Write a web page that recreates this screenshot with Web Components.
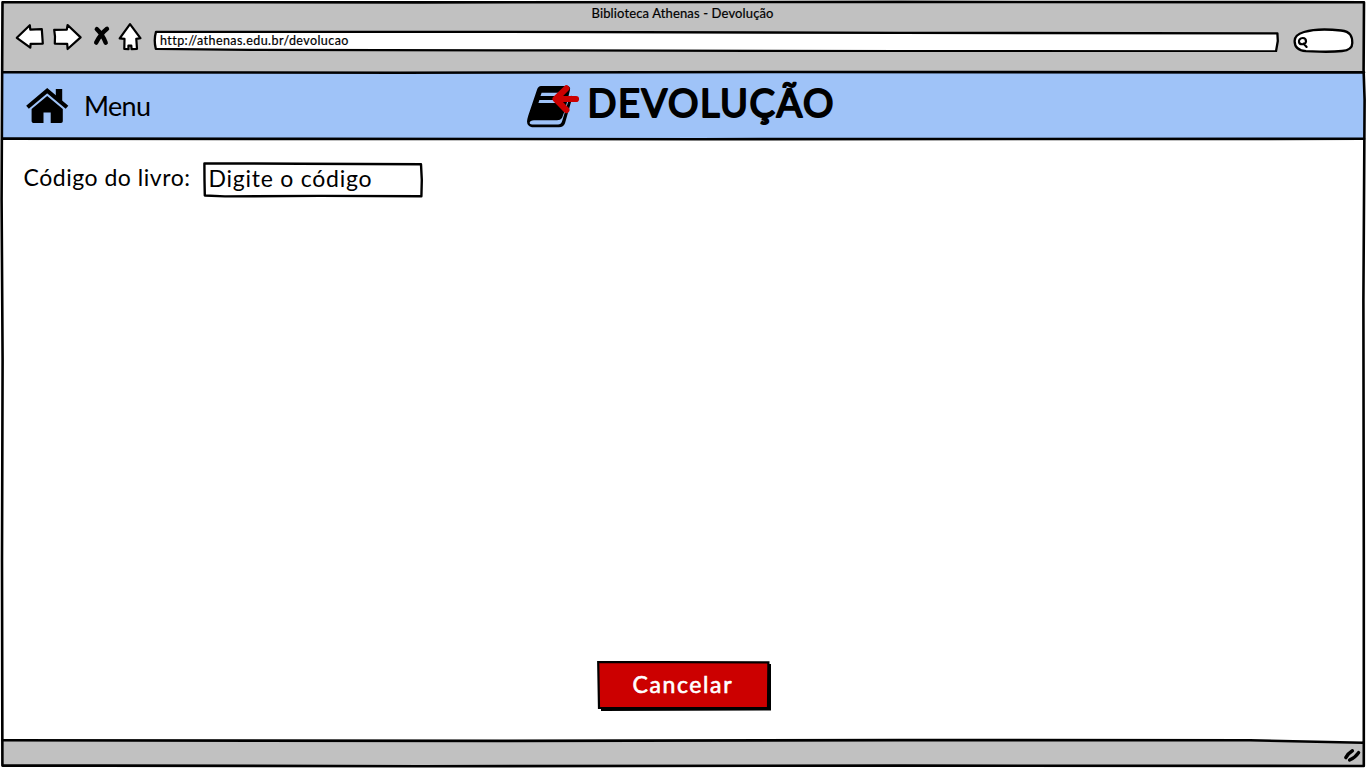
<!DOCTYPE html>
<html lang="pt-BR">
<head>
<meta charset="utf-8">
<title>Biblioteca Athenas - Devolução</title>
<style>
html,body{margin:0;height:100%;background:#fff;overflow:hidden}
body{font-family:Lato,"Open Sans",sans-serif;color:#000}
</style>
</head>
<body>
<sketch-window>
  <browser-bar slot="chrome" heading="Biblioteca Athenas - Devolução" url="http://athenas.edu.br/devolucao"></browser-bar>
  <page-header slot="header"></page-header>
  <sketch-field label="Código do livro:" value="Digite o código"></sketch-field>
  <sketch-button slot="action"><fit-text w="99">Cancelar</fit-text></sketch-button>
</sketch-window>
<script>
const define = (name, html, setup) => {
  const tpl = document.createElement('template');
  customElements.define(name, class extends HTMLElement {
    connectedCallback() {
      if (this.shadowRoot) return;
      tpl.innerHTML = html(this);
      this.attachShadow({mode: 'open'}).append(tpl.content.cloneNode(true));
      if (setup) setup(this);
    }
  });
};

/* Inline text whose tracking is adjusted to fill the width in "w". */
define('fit-text', () => `<style>:host{display:block;white-space:nowrap;line-height:1;flex:none}span{display:inline-block}</style><span><slot></slot></span>`,
  el => {
    const run = () => {
      const s = el.shadowRoot.querySelector('span');
      const n = el.textContent.length;
      s.style.letterSpacing = '0px';
      const d = (+el.getAttribute('w') - s.getBoundingClientRect().width) / (n - 1);
      s.style.letterSpacing = d.toFixed(3) + 'px';
      el.style.width = el.getAttribute('w') + 'px';
    };
    requestAnimationFrame(run);
    run();
  });

define('sketch-window', () => `<style>
:host{display:block;width:1366px;height:768px;position:relative}
.win{display:grid;grid-template-rows:72px 67px 1fr 27px;height:100%;box-sizing:border-box;padding:0}
main{display:flex;flex-direction:column;justify-content:space-between;padding:23px 0 30px 24px}
.act{display:flex;justify-content:center;padding-right:22px}
footer{background:#c1c1c1;margin:0 2px 2px}
.ink{position:absolute;inset:0;pointer-events:none}
</style>
<div class="win"><slot name="chrome"></slot><slot name="header"></slot>
<main><slot></slot><div class="act"><slot name="action"></slot></div></main><footer></footer></div>
<svg class="ink" width="1366" height="768" fill="none" stroke="#000" stroke-width="2.6" stroke-linejoin="round" stroke-linecap="round">
<path fill="#fff" stroke="none" d="M900 738L1362 738V743L1240 740.5Z"/>
<path d="M2.5 2.2L420 2.4L900 1.9L1364 2.2L1363.6 70L1364.6 100L1363.4 300L1363.8 560L1363.8 766L900 765.6L420 766.2L100 765.6L2.4 765.6L2 560L2.6 360L1.6 200L2.2 60Z"/>
<path d="M2.5 72.2L400 72.7L800 72L1364 72.4"/>
<path d="M2.5 138.6L300 138.9L700 139.2L1364 138.8"/>
<path d="M2.5 740.3L500 740.9L900 740.1L1250 740.3L1363 742.8"/>
<path stroke-width="3.4" d="M1345.8 757.6Q1348 753.5 1352.4 750.8M1349.6 760Q1355.5 757.3 1358.6 752.6"/>
</svg>`);

define('browser-bar', el => `<style>
:host{display:flex;flex-direction:column;background:#c1c1c1;margin:1px 2px 0}
.title{display:flex;justify-content:center;padding:6px 1px 0 0;height:16px;font-size:13px;-webkit-text-stroke:.2px #000}
.row{display:flex;align-items:flex-start;padding-left:13px}
svg{display:block;flex:none}
.url{display:grid;width:1126px;height:22px;margin:7px 0 0 9px}
.url>*{grid-area:1/1}
.url fit-text{font-size:12.5px;padding:5px 0 0 7px;z-index:1;-webkit-text-stroke:.2px #000}
.search{margin:4px 0 0 13px}
</style>
<div class="title"><fit-text w="182">${el.getAttribute('heading')}</fit-text></div>
<div class="row">
<svg width="129" height="30" viewBox="15 23 129 30" fill="#fff" stroke="#000" stroke-width="2.2" stroke-linejoin="round">
<path d="M16.8 37.8L29.8 25.2L30.3 29.7L41.8 29.2L42.8 43.6L30.6 43.8L30.3 47.6Z"/>
<path d="M54.2 29.8L66.8 29.6L67.6 25L80.6 37.4L67.6 49L67.2 43.8L54.8 43.6L55 36.5Z"/>
<path fill="none" stroke-width="4.4" stroke-linecap="round" d="M96.8 29.2Q102.5 34.5 105.7 42.8M107 28.8Q100.5 34 96.2 42.6"/>
<path d="M130 24.2L140.4 38.2L136.3 38.8L137 48.8L131.6 49.2L131.3 45.7L128.4 45.7L128.5 49.2L124.3 48.9L124.5 38.9L119.7 38.4Z"/>
</svg>
<div class="url"><svg width="1126" height="22" viewBox="153 30 1126 22" fill="#fff" stroke="#000" stroke-width="2.3" stroke-linejoin="round"><path d="M156 31.8L500 31.9L900 32.8L1277.4 33.4L1277.8 41L1276 51.4L900 51.2L560 50.4L250 49.8L155.8 48.8Q153.6 40 156 31.8Z"/></svg>
<fit-text w="188">${el.getAttribute('url')}</fit-text></div>
<svg class="search" width="62" height="28" viewBox="1292 27 62 28" fill="#fff" stroke="#000" stroke-width="2.3" stroke-linejoin="round" stroke-linecap="round"><path d="M1304 32C1314 29 1331 29.4 1341 30.5C1351 31.5 1352.3 37 1352.3 43C1352.3 48 1349 50.4 1342 51C1329 52.5 1318 51.6 1306 51.2C1298 50.6 1294.6 46.5 1294.6 41C1294.6 36.4 1299 33.4 1304 32Z"/><path fill="none" stroke-width="2.2" d="M1302.8 38C1299.8 38 1298.8 40.2 1299 42C1299.6 45.2 1305.6 45 1306 41.5C1306 39 1304.8 38 1302.8 38M1303.6 43.6L1306.6 46.9"/></svg>
</div>`);

define('page-header', () => `<style>
:host{display:grid;grid-template-columns:525px auto 1fr;align-items:start;background:#9fc3f8;margin:0 2px}
.menu{display:flex;gap:14px;padding:15px 0 0 23px;align-items:flex-start}
.menu fit-text{font-size:27px;padding-top:5px}
svg{display:block}
.brand{display:flex;padding-top:8px}
text{font-family:Lato,sans-serif;font-size:38px}
</style>
<div class="menu"><svg width="45" height="37" viewBox="25 87 45 37"><path d="M27.5 107.2L47.2 90.6L67 107.2" fill="none" stroke="#000" stroke-width="4.1"/><path d="M55.8 88.9H62.2V102L55.8 97ZM47.2 96L62.8 109V121.2Q62.8 123 61 123H50.7V112.4H43.5V123H33.4Q31.6 123 31.6 121.2V109Z"/></svg><fit-text w="67">Menu</fit-text></div>
<div class="brand"><svg width="310" height="54" viewBox="527 80 310 54">
<path fill-rule="evenodd" d="M541 86H567Q570.8 86.3 570 90L568 98L565 110L562 118Q560.5 120.3 557 120.3H534Q530 120.4 529.6 123Q529.8 124.4 532 124.4H558Q561 124.4 562 121.5L569.6 97L571.2 95.5Q572.3 98 571.3 101L565 123.2Q563.5 127.2 559 127.2H532Q527.2 126.4 527 121.5Q527.1 119.3 528.3 115.4L537 89.7Q538.3 86 541 86ZM541.6 92.7L540.5 95.9H562L563 92.7ZM539.4 99.9L538.4 103H560.5L561.4 99.9Z"/>
<path d="M576 99H556M566.4 88.4L555.6 99L566.4 110" fill="none" stroke="#c00" stroke-width="6.2" stroke-linecap="round" stroke-linejoin="round"/>
<text x="587.5" y="117.3" textLength="246" lengthAdjust="spacing" stroke="#000" stroke-width="2" stroke-linejoin="round">DEVOLUÇÃO</text></svg></div>`);

define('sketch-field', el => `<style>
:host{display:flex;align-items:flex-start;gap:13px;font-size:23px}
fit-text{padding-top:4px;margin-left:-.5px}
.box{display:grid;width:220px;height:36px}
.box>*{grid-area:1/1}
.box fit-text{z-index:1;padding:5px 0 0 6px}
svg{display:block}
</style><fit-text w="166.5">${el.getAttribute('label')}</fit-text>
<div class="box"><svg width="220" height="36" viewBox="203 162 220 36" fill="#fff" stroke="#000" stroke-width="2.4" stroke-linejoin="round"><path d="M204.4 163.4L300 163.7L421 164.2L421.8 180L421.4 196.3L320 195.9L225 196.4L204.8 195.5L204.5 180Z"/></svg>
<fit-text w="163">${el.getAttribute('value')}</fit-text></div>`);

define('sketch-button', () => `<style>
:host{display:grid;width:175px;height:50px;color:#fff;font-size:23px;font-weight:400}
svg,div{grid-area:1/1}
div{z-index:1;display:flex;padding:12px 0 0 36px;-webkit-text-stroke:.6px #fff}
</style><svg width="175" height="50" viewBox="597 661 175 50"><path d="M601 709V664H771V710.4L601 711Z"/><path d="M598.2 662L768.4 662.3L768 708L599 707.8Z" fill="#c00" stroke="#000" stroke-width="2.2"/></svg><div><slot></slot></div>`);
</script>
</body>
</html>
